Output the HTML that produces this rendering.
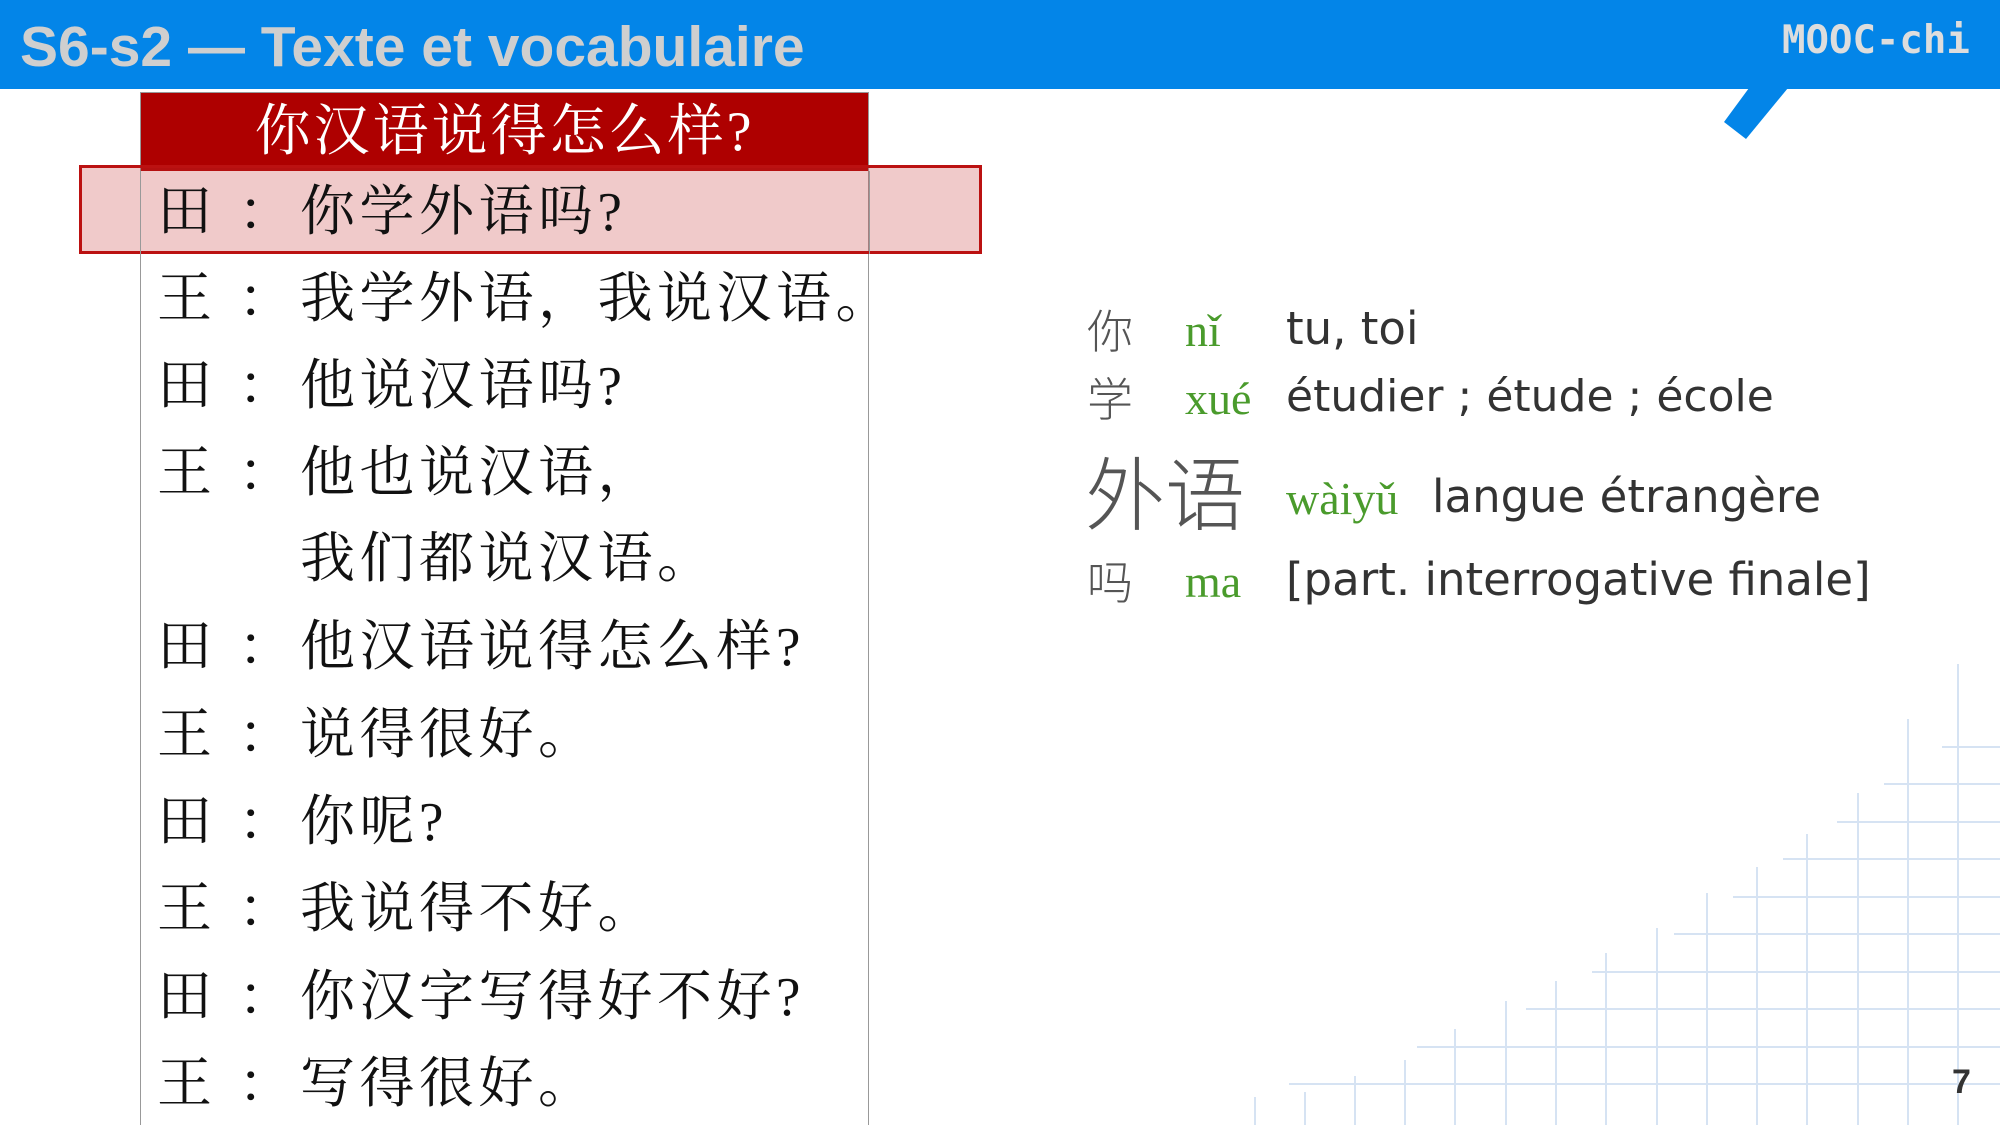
<!DOCTYPE html>
<html><head><meta charset="utf-8"><style>
body{margin:0;width:2000px;height:1125px;overflow:hidden;background:#fff;position:relative;font-family:"Liberation Sans","Noto Sans CJK SC",sans-serif}
.a{position:absolute;white-space:nowrap}
#hdr{left:0;top:0;width:2000px;height:89px;background:#0385e8}
.cj{font-family:"Liberation Serif","Noto Serif CJK SC",serif;color:#111;font-size:55px;line-height:60px;height:60px;letter-spacing:4.5px}
.r{position:absolute;left:0;width:2000px;height:60px}
.hz{font-family:"Noto Sans CJK SC",sans-serif;color:#555;font-weight:300}
.py{font-family:"Liberation Serif",serif;color:#4a9b2c}
.fr{font-family:"DejaVu Sans","Liberation Sans",sans-serif;color:#333}
</style></head><body>
<div class="a" id="hdr"></div>
<div class="a" style="left:20px;top:12px;font-size:57px;font-weight:bold;color:#cfcfcf;line-height:70px">S6-s2 — Texte et vocabulaire</div>
<div class="a" style="left:1782px;top:16px;font-family:'DejaVu Sans Mono','Liberation Mono',monospace;font-weight:bold;font-size:39px;color:#ddd;line-height:50px">MOOC-chi</div>
<svg class="a" style="left:0;top:0" width="2000" height="1125">
<polygon points="1749,88 1788,88 1746,139 1724,122" fill="#0385e8"/>
<g stroke="#d6e3f3" stroke-width="2">
<line x1="1255" y1="1097" x2="1255" y2="1125"/><line x1="1305" y1="1092" x2="1305" y2="1125"/>
<line x1="1355" y1="1076" x2="1355" y2="1125"/><line x1="1405" y1="1060" x2="1405" y2="1125"/>
<line x1="1455" y1="1029" x2="1455" y2="1125"/><line x1="1506" y1="1001" x2="1506" y2="1125"/>
<line x1="1556" y1="981" x2="1556" y2="1125"/><line x1="1606" y1="953" x2="1606" y2="1125"/>
<line x1="1657" y1="928" x2="1657" y2="1125"/><line x1="1707" y1="893" x2="1707" y2="1125"/>
<line x1="1757" y1="867" x2="1757" y2="1125"/><line x1="1807" y1="834" x2="1807" y2="1125"/>
<line x1="1858" y1="793" x2="1858" y2="1125"/><line x1="1908" y1="719" x2="1908" y2="1125"/>
<line x1="1958" y1="664" x2="1958" y2="1125"/>
<line x1="1942" y1="747" x2="2000" y2="747"/><line x1="1884" y1="784" x2="2000" y2="784"/>
<line x1="1837" y1="822" x2="2000" y2="822"/><line x1="1783" y1="859" x2="2000" y2="859"/>
<line x1="1733" y1="897" x2="2000" y2="897"/><line x1="1674" y1="934" x2="2000" y2="934"/>
<line x1="1592" y1="972" x2="2000" y2="972"/><line x1="1526" y1="1009" x2="2000" y2="1009"/>
<line x1="1417" y1="1047" x2="2000" y2="1047"/><line x1="1289" y1="1084" x2="2000" y2="1084"/>
</g>
</svg>
<div class="a" style="left:1952px;top:1060px;font-size:34px;font-weight:bold;color:#333;line-height:44px">7</div>
<!-- table -->
<div class="a" style="left:140px;top:92px;width:729px;height:1033px;border:1px solid #999;border-bottom:none;box-sizing:border-box"></div>
<div class="a" style="left:141px;top:93px;width:727px;height:78px;background:#ae0000"></div>
<div class="a" style="left:141px;top:101px;width:727px;text-align:center;font-family:'Liberation Serif','Noto Serif CJK SC',serif;color:#fff;font-size:56px;line-height:62px;letter-spacing:3px">你汉语说得怎么样?</div>
<div class="a" style="left:79px;top:165px;width:903px;height:89px;border:3px solid #bb1111;background:rgba(200,60,60,0.27);box-sizing:border-box"></div>
<div class="a" style="left:140px;top:171px;width:1px;height:83px;background:#999"></div>
<div class="a" style="left:869px;top:171px;width:1px;height:83px;background:#999"></div>
<div class="a cj" style="left:0;top:0;width:2000px">
<div class="r" style="top:182px"><span class="a" style="left:157px">田</span><span class="a" style="left:238px">：</span><span class="a" style="left:300px">你学外语吗?</span></div>
<div class="r" style="top:269px"><span class="a" style="left:157px">王</span><span class="a" style="left:238px">：</span><span class="a" style="left:300px">我学外语，我说汉语。</span></div>
<div class="r" style="top:356px"><span class="a" style="left:157px">田</span><span class="a" style="left:238px">：</span><span class="a" style="left:300px">他说汉语吗?</span></div>
<div class="r" style="top:443px"><span class="a" style="left:157px">王</span><span class="a" style="left:238px">：</span><span class="a" style="left:300px">他也说汉语，</span></div>
<div class="r" style="top:529px"><span class="a" style="left:300px">我们都说汉语。</span></div>
<div class="r" style="top:617px"><span class="a" style="left:157px">田</span><span class="a" style="left:238px">：</span><span class="a" style="left:300px">他汉语说得怎么样?</span></div>
<div class="r" style="top:705px"><span class="a" style="left:157px">王</span><span class="a" style="left:238px">：</span><span class="a" style="left:300px">说得很好。</span></div>
<div class="r" style="top:792px"><span class="a" style="left:157px">田</span><span class="a" style="left:238px">：</span><span class="a" style="left:300px">你呢?</span></div>
<div class="r" style="top:879px"><span class="a" style="left:157px">王</span><span class="a" style="left:238px">：</span><span class="a" style="left:300px">我说得不好。</span></div>
<div class="r" style="top:967px"><span class="a" style="left:157px">田</span><span class="a" style="left:238px">：</span><span class="a" style="left:300px">你汉字写得好不好?</span></div>
<div class="r" style="top:1054px"><span class="a" style="left:157px">王</span><span class="a" style="left:238px">：</span><span class="a" style="left:300px">写得很好。</span></div>
</div>
<!-- vocab -->
<div class="a hz" style="left:1087px;top:300px;font-size:46px;line-height:58px">你</div>
<div class="a py" style="left:1185px;top:302px;font-size:46px;line-height:58px">nǐ</div>
<div class="a fr" style="left:1286px;top:300px;font-size:45px;line-height:58px">tu, toi</div>
<div class="a hz" style="left:1087px;top:368px;font-size:46px;line-height:58px">学</div>
<div class="a py" style="left:1185px;top:370px;font-size:46px;line-height:58px">xué</div>
<div class="a fr" style="left:1286px;top:368px;font-size:44px;line-height:58px">étudier ; étude ; école</div>
<div class="a hz" style="left:1085px;top:445px;font-size:80px;line-height:90px">外语</div>
<div class="a py" style="left:1286px;top:470px;font-size:46px;line-height:58px">wàiyǔ</div>
<div class="a fr" style="left:1432px;top:468px;font-size:45px;line-height:58px">langue étrangère</div>
<div class="a hz" style="left:1087px;top:551px;font-size:46px;line-height:58px">吗</div>
<div class="a py" style="left:1185px;top:553px;font-size:46px;line-height:58px">ma</div>
<div class="a fr" style="left:1286px;top:551px;font-size:45px;line-height:58px">[part. interrogative finale]</div>
</body></html>
